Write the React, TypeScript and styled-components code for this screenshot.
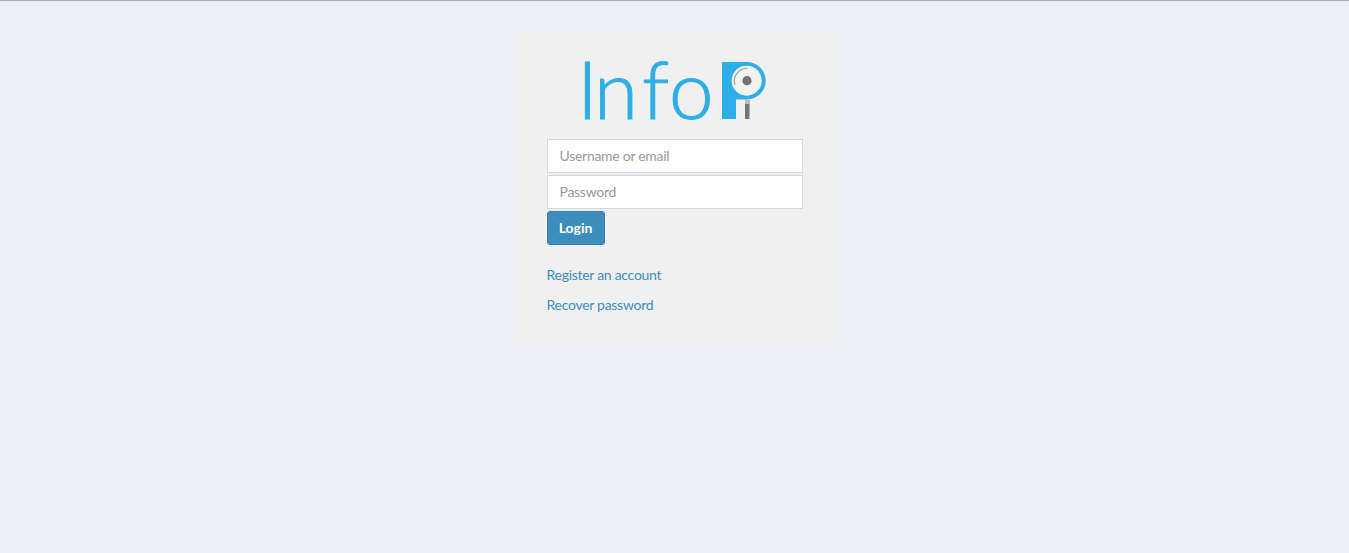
import React, { ReactElement } from "react";
import styled, { createGlobalStyle } from "styled-components";

const FONT = `"Lato", "Noto Sans", sans-serif`;
const BLUE = "#3c8dbc";
const LOGO_BLUE = "#2eaee6";

const GlobalStyle = createGlobalStyle`
  html, body {
    margin: 0;
    padding: 0;
    height: 100%;
  }
  body {
    background-color: #ecf0f5;
    font-family: ${FONT};
    font-size: 14px;
  }
  * {
    box-sizing: border-box;
  }
`;

const Page = styled.div`
  min-height: 553px;
  border-top: 1px solid #acafb3;
  padding-top: 31px;
`;

const LoginBox = styled.div`
  width: 320px;
  height: 313px;
  margin: 0 auto;
  padding: 3px 32px 0;
  background-color: #f0f0f0;
`;

const LogoWrap = styled.div`
  display: flex;
  justify-content: center;
  height: 104px;
`;

const LogoText = styled.text`
  font-family: "Lato", sans-serif;
  font-weight: 300;
  font-size: 80px;
  fill: ${LOGO_BLUE};
  stroke: ${LOGO_BLUE};
  stroke-width: 1;
`;

const Form = styled.form`
  display: flex;
  flex-direction: column;
  align-items: flex-start;
  gap: 2px;
`;

const Input = styled.input`
  width: 256px;
  height: 34px;
  padding: 5px 12px 7px;
  border: 1px solid #d2d6de;
  background: #fff;
  font-family: ${FONT};
  font-size: 14px;
  letter-spacing: -0.28px;
  outline: none;

  &::placeholder {
    color: #999;
    opacity: 1;
  }
`;

const Button = styled.button`
  height: 34px;
  width: 58px;
  padding: 0 0 2px;
  border: 1px solid #367fa9;
  border-radius: 3px;
  background-color: ${BLUE};
  color: #fff;
  font-family: ${FONT};
  font-size: 14px;
  font-weight: 700;
`;

const Links = styled.div`
  display: flex;
  flex-direction: column;
  align-items: flex-start;
  gap: 10px;
  margin-top: 20px;
`;

const LinkText = styled.a`
  color: ${BLUE};
  font-size: 14px;
  line-height: 20px;
  letter-spacing: -0.28px;
  text-decoration: none;
`;

const Logo = (): ReactElement => (
  <svg width="200" height="104" viewBox="575 35 200 104" role="img" aria-label="InfoPi">
    <LogoText x="577 594 642 669" y="119">
      Info
    </LogoText>
    {/* the P with the lens in it */}
    <path
      d="M722 62h25a18.7 18.7 0 0 1 0 37.4h-11V119h-14z"
      fill={LOGO_BLUE}
    />
    <circle cx="746.7" cy="80.7" r="15" fill="#f2f2f2" />
    <path
      d="M735 85a12.5 12.5 0 0 1 12-16.5"
      fill="none"
      stroke="#a0a0a0"
      strokeWidth="1.2"
    />
    <circle cx="747" cy="80.7" r="4.6" fill="#717171" />
    <rect x="745" y="100" width="4.5" height="19" fill="#757575" />
    <rect x="745" y="100" width="4.5" height="4" fill="#b9b9b9" />
  </svg>
);

export default function App(): ReactElement {
  return (
    <Page>
      <GlobalStyle />
      <LoginBox>
        <LogoWrap>
          <Logo />
        </LogoWrap>
        <Form onSubmit={(e) => e.preventDefault()}>
          <Input type="text" placeholder="Username or email" />
          <Input type="password" placeholder="Password" />
          <Button type="submit">Login</Button>
        </Form>
        <Links>
          <LinkText href="#">Register an account</LinkText>
          <LinkText href="#">Recover password</LinkText>
        </Links>
      </LoginBox>
    </Page>
  );
}
